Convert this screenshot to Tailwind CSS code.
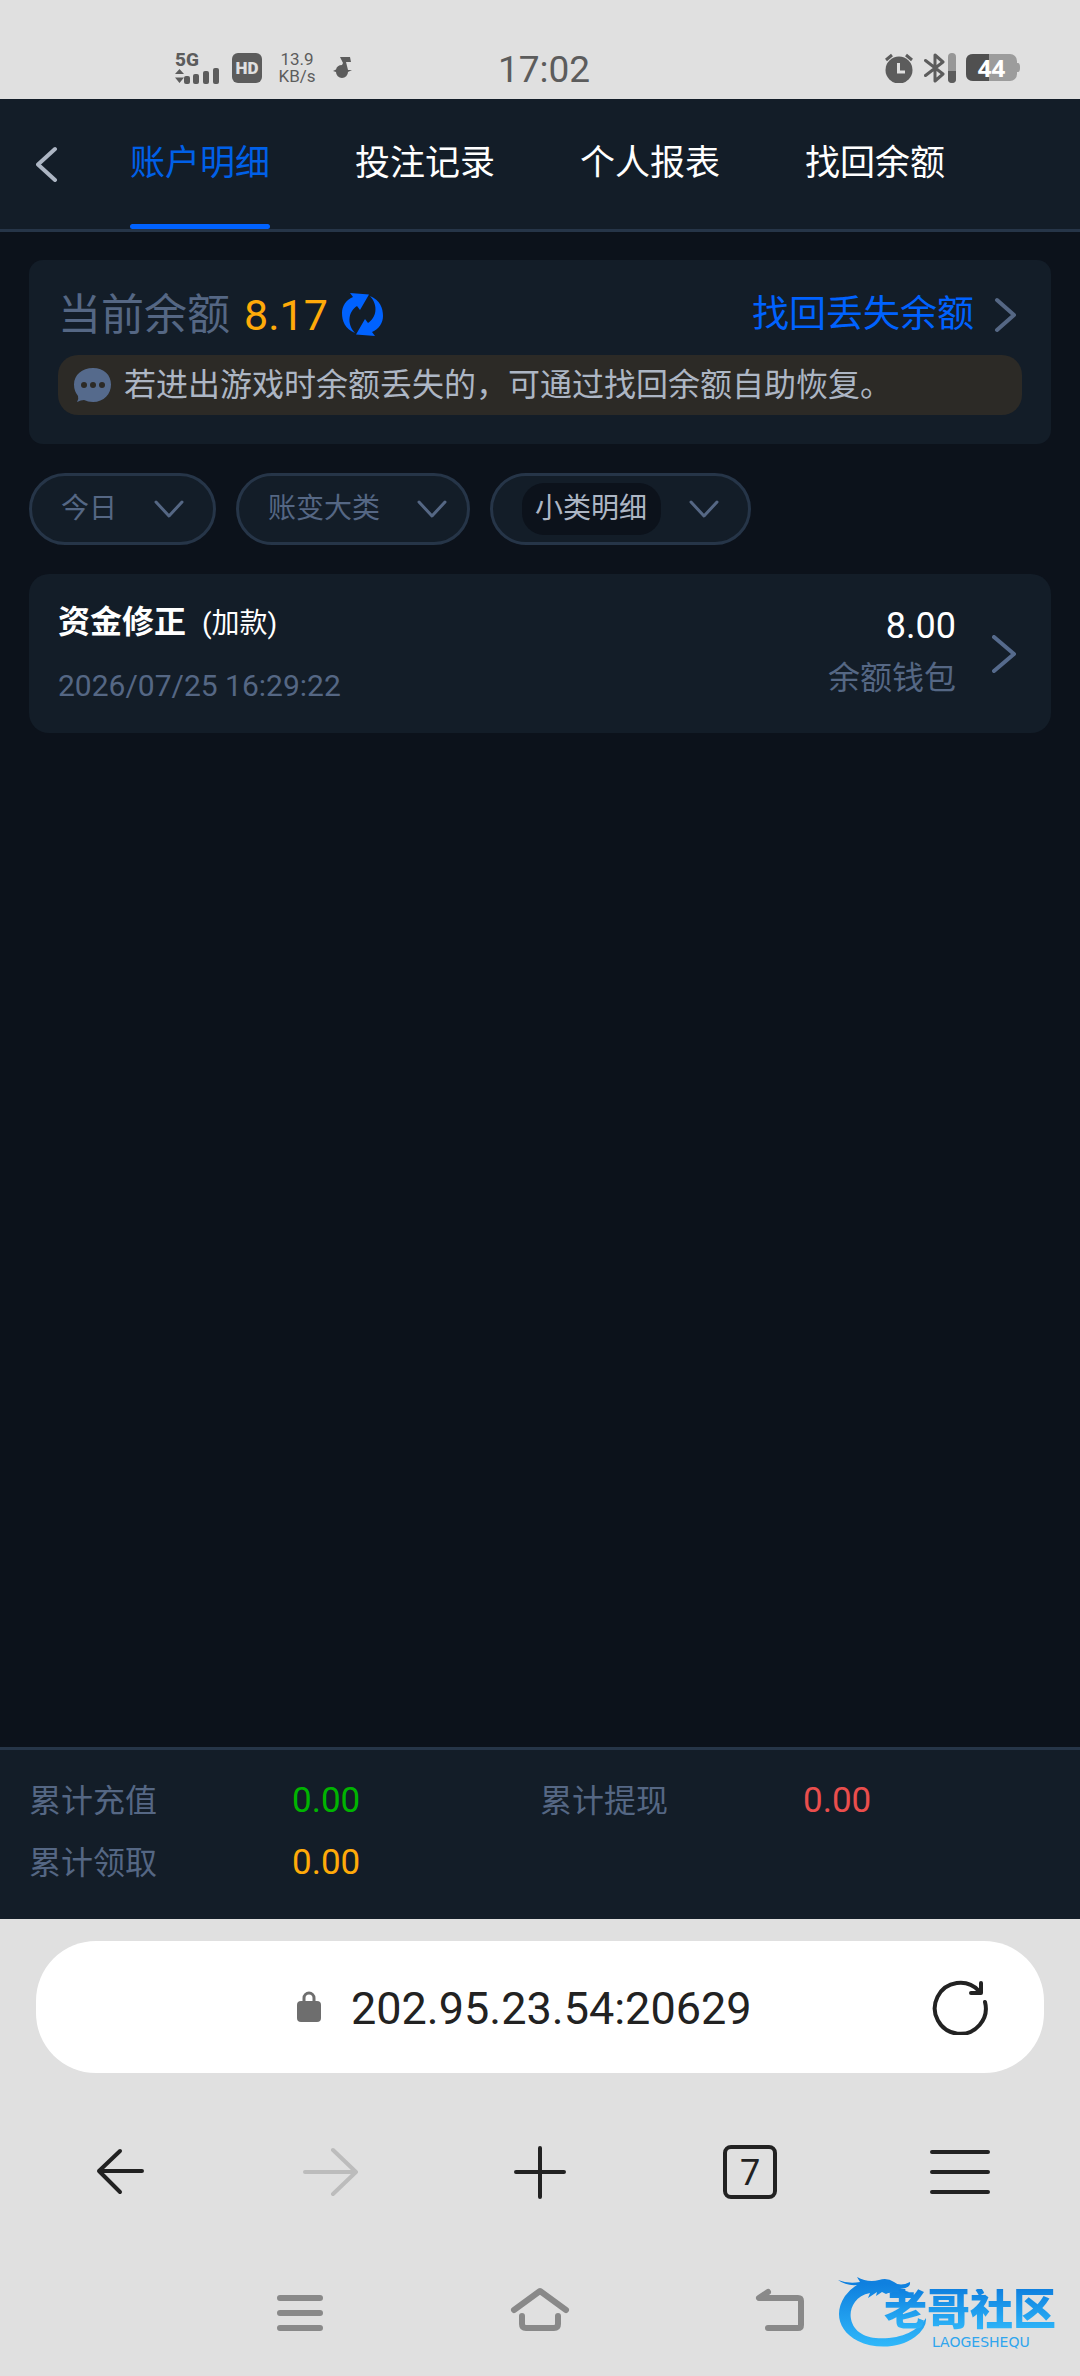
<!DOCTYPE html>
<html lang="zh-CN">
<head>
    <meta charset="UTF-8">
    <meta name="viewport" content="width=device-width, initial-scale=1.0">
    <title>账户明细</title>
    <script src="https://cdn.jsdelivr.net/npm/@tailwindcss/browser@4"></script>
</head>
<body class="min-h-screen flex flex-col bg-[#0c121b] text-white font-[Roboto,'Noto_Sans_CJK_SC',sans-serif]">
    <!-- Status bar -->
    <div class="h-[99px] shrink-0 grid grid-cols-3 items-center bg-[#e0e0e0] text-[#5c5c5c] pt-9 px-[60px]">
        <div class="flex items-center pl-[115px]">
            <div class="w-[45px] mr-3">
                <div class="text-[19px] leading-[16px] font-extrabold">5G</div>
                <svg class="w-[45px] h-[16px]" viewBox="0 0 45 16" fill="currentColor">
                    <path d="M0 6 4.500 1 9 6zM0 9.500H9L4.500 15z"/>
                    <rect x="9" y="8" width="6" height="8" rx="2"/>
                    <rect x="18" y="6" width="6" height="10" rx="2"/>
                    <rect x="28" y="3" width="6" height="13" rx="2"/>
                    <rect x="38" y="0" width="6" height="16" rx="2"/>
                </svg>
            </div>
            <span class="w-[30px] h-[30px] rounded-[6px] bg-[#5c5c5c] text-[#e0e0e0] text-[17px] leading-[30px] font-black text-center mr-4">HD</span>
            <span class="w-[38px] text-[17px] leading-[17px] text-center mr-[17px]">13.9<br>KB/s</span>
            <svg class="w-[19px] h-[21px]" viewBox="0 0 19 21" fill="currentColor">
                <path d="M7 0H17L18 5H13L15 13H19L15 15A6 6 0 0 1 3 15L0 14L3 12.500Q4 8 9 8L10 6z"/>
            </svg>
        </div>
        <div class="text-[37px] leading-[40px] text-center pl-2 pt-1">17:02</div>
        <div class="flex items-center justify-end gap-[10px]">
            <svg class="w-[30px] h-[30px]" viewBox="0 0 30 30">
                <circle cx="15" cy="17" r="13.500" fill="currentColor"/>
                <path d="M2 7 8 2M28 7 22 2" stroke="currentColor" stroke-width="3"/>
                <path d="M14.500 10V19H21" fill="none" stroke="#e0e0e0" stroke-width="3"/>
            </svg>
            <svg class="w-[32px] h-[30px]" viewBox="0 0 32 30">
                <path d="M1.500 7.500 19 21 11 28V2L19 9 1.500 22.500" fill="none" stroke="currentColor" stroke-width="3" stroke-linecap="round" stroke-linejoin="round"/>
                <rect x="24" y="0" width="8" height="30" rx="4" fill="#979797"/>
                <path d="M24 18H32V26A4 4 0 0 1 24 26z" fill="currentColor"/>
            </svg>
            <div class="relative w-[54px] h-[27px]">
                <svg class="w-[54px] h-[27px]" viewBox="0 0 54 27">
                    <rect width="51" height="27" rx="7" fill="#9c9c9c"/>
                    <path d="M51 9H52Q54 9 54 13.500T52 18H51z" fill="#9c9c9c"/>
                    <path d="M7 0H23V27H7Q0 27 0 20V7Q0 0 7 0z" fill="#505050"/>
                </svg>
                <span class="absolute inset-0 pr-[3px] text-center text-[24px] leading-[27px] font-bold text-white font-['Open_Sans',sans-serif]">44</span>
            </div>
        </div>
    </div>

    <!-- Header tabs -->
    <header class="h-[133px] shrink-0 flex bg-[#131d28] border-b-3 border-[#263548] pl-[36px]">
        <button type="button" aria-label="返回" class="w-[94px] flex items-center">
            <svg class="w-[22px] h-[36px]" viewBox="0 0 22 36" fill="none" stroke="#adb6c4" stroke-width="4" stroke-linecap="round" stroke-linejoin="round"><path d="M19 3 2 18.500 19 34"/></svg>
        </button>
        <nav class="flex gap-[85px] text-[35px] leading-[40px]">
            <a href="#" class="relative flex items-center pb-px text-[#0060e8]">账户明细<span class="absolute inset-x-0 bottom-0 h-[5px] rounded-full bg-[#0062ff]"></span></a>
            <a href="#" class="flex items-center pb-px">投注记录</a>
            <a href="#" class="flex items-center pb-px">个人报表</a>
            <a href="#" class="flex items-center pb-px">找回余额</a>
        </nav>
    </header>

    <main class="flex-1 flex flex-col gap-[29px] px-[29px] pt-7">
        <!-- Balance -->
        <section class="bg-[#131d28] rounded-[14px] px-[29px] pt-[14px] pb-[29px]">
            <div class="h-[81px] flex items-center">
                <span class="text-[43px] leading-[50px] text-[#556784]">当前余额</span>
                <span class="text-[43px] leading-[50px] text-[#ffaa09] ml-[14px]">8.17</span>
                <button type="button" aria-label="刷新" class="ml-[14px]">
                    <svg class="w-[41px] h-[43px]" viewBox="0 0 41 43" fill="#0062ff">
                        <path id="arrow" d="M13 40C3 36 0 28 0 20C0 13 4 7 11 4L8 0L27 1.500L18 17L15 13C7 18 4 30 13 40z"/>
                        <use href="#arrow" transform="rotate(180 20.500 21.500)"/>
                    </svg>
                </button>
                <a href="#" class="ml-auto flex items-center gap-[20px] text-[37px] leading-[44px] text-[#0062ff] pr-[6px]">
                    找回丢失余额
                    <svg class="w-[22px] h-[36px]" viewBox="0 0 22 36" fill="none" stroke="#556784" stroke-width="4" stroke-linecap="round" stroke-linejoin="round"><path d="M3 3 20 18 3 33"/></svg>
                </a>
            </div>
            <p class="h-[60px] flex items-center gap-[12px] rounded-[20px] bg-[#2c2a26] text-[#adb6c4] text-[32px] leading-[40px] pl-[16px]">
                <svg class="w-[38px] h-[34px]" viewBox="0 0 38 34">
                    <path d="M19 0C30 0 37 7 37 16.500S30 34 19 34C15 34 13 33 10 32Q7 32 3 34Q5 31 4 28Q0 23 0 16.500C0 7 8 0 19 0z" fill="#556a8c"/>
                    <g fill="#2c2a26"><circle cx="10" cy="17" r="3"/><circle cx="19" cy="17" r="3"/><circle cx="28" cy="17" r="3"/></g>
                </svg>
                若进出游戏时余额丢失的，可通过找回余额自助恢复。
            </p>
        </section>

        <!-- Filters -->
        <form class="flex gap-[20px] text-[28px] leading-[40px] text-[#556784]">
            <label class="h-[72px] flex items-center gap-[36px] rounded-full border-3 border-[#263548] bg-[#131d28] px-[29px]">
                <select aria-label="日期" class="appearance-none bg-transparent">
                    <option>今日</option>
                </select>
                <svg class="w-[30px] h-[18px]" viewBox="0 0 30 18" fill="none" stroke="currentColor" stroke-width="3" stroke-linecap="round" stroke-linejoin="round"><path d="M2 2 15 16 28 2"/></svg>
            </label>
            <label class="h-[72px] flex items-center gap-[36px] rounded-full border-3 border-[#263548] bg-[#131d28] pl-[29px] pr-[20px]">
                <select aria-label="账变大类" class="appearance-none bg-transparent">
                    <option>账变大类</option>
                </select>
                <svg class="w-[30px] h-[18px]" viewBox="0 0 30 18" fill="none" stroke="currentColor" stroke-width="3" stroke-linecap="round" stroke-linejoin="round"><path d="M2 2 15 16 28 2"/></svg>
            </label>
            <label class="h-[72px] flex items-center gap-[28px] rounded-full border-3 border-[#263548] bg-[#131d28] px-[29px]">
                <select aria-label="小类明细" class="appearance-none h-[52px] rounded-[22px] bg-[#0c121b] text-[#adb6c4] px-[13px]">
                    <option>小类明细</option>
                </select>
                <svg class="w-[30px] h-[18px]" viewBox="0 0 30 18" fill="none" stroke="currentColor" stroke-width="3" stroke-linecap="round" stroke-linejoin="round"><path d="M2 2 15 16 28 2"/></svg>
            </label>
        </form>

        <!-- Record -->
        <a href="#" class="h-[159px] flex items-center bg-[#131d28] rounded-[20px] pl-[29px] pr-[35px]">
            <div class="flex-1">
                <h2 class="text-[32px] leading-[40px] font-bold">资金修正<span class="text-[28px] font-normal ml-[16px]">(加款)</span></h2>
                <time class="block text-[30px] leading-[40px] mt-[22px] text-[#556784]">2026/07/25 16:29:22</time>
            </div>
            <div class="text-right mr-[36px] pb-1">
                <div class="text-[36px] leading-[52px]">8.00</div>
                <div class="text-[32px] leading-[52px] text-[#556784]">余额钱包</div>
            </div>
            <svg class="w-[24px] h-[38px]" viewBox="0 0 24 38" fill="none" stroke="#556a8c" stroke-width="4" stroke-linecap="round" stroke-linejoin="round"><path d="M2 2 22 19 2 36"/></svg>
        </a>
    </main>

    <!-- Totals -->
    <footer class="h-[172px] shrink-0 border-t-3 border-[#263548] bg-[#131d28] px-[29px] pt-5">
        <dl class="grid grid-cols-2 text-[32px] leading-[62px]">
            <div class="flex"><dt class="w-[263px] text-[#556784]">累计充值</dt><dd class="text-[35px] text-[#00b400]">0.00</dd></div>
            <div class="flex"><dt class="w-[263px] text-[#556784]">累计提现</dt><dd class="text-[35px] text-[#ea4e4d]">0.00</dd></div>
            <div class="flex"><dt class="w-[263px] text-[#556784]">累计领取</dt><dd class="text-[35px] text-[#ffaa09]">0.00</dd></div>
        </dl>
    </footer>

    <!-- Browser bar -->
    <div class="relative shrink-0 bg-[#e0e0e0] text-[#222] pt-[22px]">
        <form class="h-[132px] mx-9 flex items-center rounded-[60px] bg-white pl-[90px] pr-[56px]">
            <label class="flex-1 flex items-center justify-center gap-[30px]">
                <svg class="w-[24px] h-[32px]" viewBox="0 0 24 32" fill="#6e6e6e">
                    <rect y="10" width="24" height="21" rx="4"/>
                    <path d="M7 12V7A5 5 0 0 1 17 7V12" fill="none" stroke="#6e6e6e" stroke-width="3"/>
                </svg>
                <input type="text" aria-label="网址" value="202.95.23.54:20629" class="w-[410px] pt-[3px] text-[45px] leading-[54px]">
            </label>
            <button type="button" aria-label="重新加载">
                <svg class="w-[56px] h-[56px]" viewBox="0 0 56 56" fill="none" stroke="#222" stroke-width="4" stroke-linecap="round" stroke-linejoin="round">
                    <path d="M53 23A25.500 25.500 0 1 1 47 12"/><path d="M49 4V14H39"/>
                </svg>
            </button>
        </form>
        <div class="grid grid-cols-5 justify-items-center items-center px-[15px] pt-[71px]">
            <button type="button" aria-label="后退">
                <svg class="w-[48px] h-[56px]" viewBox="0 0 48 56" fill="none" stroke="#222" stroke-width="4" stroke-linecap="round" stroke-linejoin="round"><path d="M24 7 3 27 24 48M3 27H46"/></svg>
            </button>
            <button type="button" aria-label="前进" disabled>
                <svg class="w-[56px] h-[56px]" viewBox="0 0 56 56" fill="none" stroke="#bcbcbc" stroke-width="4" stroke-linecap="round" stroke-linejoin="round"><path d="M31 6 54 28 31 50M54 28H3"/></svg>
            </button>
            <button type="button" aria-label="新标签页">
                <svg class="w-[56px] h-[56px]" viewBox="0 0 56 56" fill="none" stroke="#222" stroke-width="4" stroke-linecap="round"><path d="M28 4V53M4 28H52"/></svg>
            </button>
            <button type="button" class="w-[54px] h-[54px] rounded-[8px] border-4 border-[#222] text-[36px] leading-[48px]">7</button>
            <button type="button" aria-label="菜单">
                <svg class="w-[60px] h-[56px]" viewBox="0 0 60 56" stroke="#222" stroke-width="4" stroke-linecap="round"><path d="M2 8H58M2 28H58M2 48H58"/></svg>
            </button>
        </div>
        <div class="flex justify-center gap-[180px] pt-[81px] pb-[37px]">
            <button type="button" aria-label="最近任务">
                <svg class="w-[60px] h-[58px]" viewBox="0 0 60 58" stroke="#898989" stroke-width="6" stroke-linecap="round"><path d="M10 17H50M10 32H50M10 47H50"/></svg>
            </button>
            <button type="button" aria-label="主屏幕">
                <svg class="w-[60px] h-[58px]" viewBox="0 0 60 58" fill="none" stroke="#898989" stroke-width="6" stroke-linecap="round" stroke-linejoin="round"><path d="M4 29 30 10 56 29M12 35V43Q12 47 16 47H44Q48 47 48 43V35"/></svg>
            </button>
            <button type="button" aria-label="返回">
                <svg class="w-[60px] h-[58px]" viewBox="0 0 60 58" fill="none" stroke="#898989" stroke-width="6" stroke-linecap="round" stroke-linejoin="round"><path d="M18 11 9 17H48Q51 17 51 20V44Q51 47 48 47H18"/></svg>
            </button>
        </div>

        <!-- Community logo, floats over the navigation bar -->
        <div class="absolute right-5 bottom-[26px] w-[222px] h-[74px]">
            <svg class="w-[222px] h-[74px]" viewBox="0 0 222 74">
                <defs>
                    <linearGradient id="sky" x1="0" y1="0" x2="0" y2="1">
                        <stop offset="0.100" stop-color="#0f80df"/><stop offset="1" stop-color="#30b8fa"/>
                    </linearGradient>
                </defs>
                <path fill="url(#sky)" d="M0 4Q10 8 22 6L19 1Q30 7 41 4Q49 1 56 6Q62 11 72 6Q73 12 62 13L71 16Q68 20 60 19Q53 15 48 18L44 16L38 20L39 16L30 22L32 17C16 20 11 34 13 43C16 58 31 64 51 62C72 60 83 50 88 42Q89 52 77 61C61 73 36 73 20 65C0 55-4 36 7 20Q12 13 19 9Q8 10 0 4z"/>
            </svg>
            <div class="absolute left-[46px] top-[13px] text-[43px] leading-[43px] font-black text-transparent bg-linear-to-b from-[#0f80df] to-[#30b8fa] bg-clip-text">老哥社区</div>
            <div class="absolute left-[94px] top-[59px] text-[14px] leading-[14px] text-[#2fa5ee] font-['DejaVu_Sans',sans-serif]">LAOGESHEQU</div>
        </div>
    </div>
</body>
</html>
